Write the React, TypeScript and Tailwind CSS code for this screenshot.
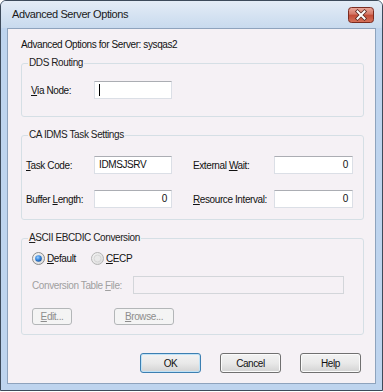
import React from "react";

const font = "font-['Liberation_Sans',Arial,sans-serif]";

function Radio({ checked }: { checked: boolean }) {
  return (
    <svg width="13" height="13" viewBox="0 0 13 13" className="shrink-0">
      <defs>
        <linearGradient id={checked ? "rg1" : "rg0"} x1="0" y1="0" x2="1" y2="1">
          <stop offset="0" stopColor="#f4f4f4" />
          <stop offset="1" stopColor="#dcdcdc" />
        </linearGradient>
        <radialGradient id="dot" cx="0.4" cy="0.35" r="0.7">
          <stop offset="0" stopColor="#9fd0ff" />
          <stop offset="0.5" stopColor="#3a8ae0" />
          <stop offset="1" stopColor="#17509a" />
        </radialGradient>
      </defs>
      <circle cx="6.5" cy="6.5" r="6" fill={checked ? "url(#rg1)" : "url(#rg0)"} stroke={checked ? "#8a8a8a" : "#b4b4b4"} />
      {checked ? (
        <circle cx="6.5" cy="6.5" r="3.3" fill="url(#dot)" />
      ) : (
        <circle cx="6.5" cy="6.5" r="3.5" fill="#e9e9e9" stroke="#d0d0d0" strokeWidth="0.8" />
      )}
    </svg>
  );
}

function Field({ value, right, width, caret }: { value?: string; right?: boolean; width: string; caret?: boolean }) {
  return (
    <div
      className={`${width} h-[18px] shrink-0 bg-white border border-[#dbdfe6] border-t-[#abadb3] flex items-center px-[4px] ${right ? "justify-end" : ""}`}
    >
      {caret && <span className="w-px h-[12px] bg-black" />}
      {value && <span className="text-[10px] leading-[12px] tracking-[-0.4px] text-[#111]">{value}</span>}
    </div>
  );
}

function Btn({ children, def, disabled, width }: { children: React.ReactNode; def?: boolean; disabled?: boolean; width: string }) {
  if (disabled)
    return (
      <div className={`${width} h-[17px] rounded-[3px] border border-[#b3b6b8] bg-[#f4f4f4] flex items-center justify-center text-[10px] tracking-[-0.4px] text-[#8d8d8d]`}>
        {children}
      </div>
    );
  return (
    <div
      className={`${width} h-[20px] rounded-[3px] border ${def ? "border-[#3c7fb1] shadow-[inset_0_0_0_1px_#bfe2f7]" : "border-[#707070] shadow-[inset_0_0_0_1px_#fbfbfb]"} bg-linear-to-b from-[#f3f3f3] via-[#e9e9e9] to-[#d3d3d3] flex items-center justify-center text-[10px] tracking-[-0.4px] text-[#111]`}
    >
      {children}
    </div>
  );
}

export default function App() {
  return (
    <div className={`w-[383px] h-[392px] bg-white ${font}`}>
      <div className="w-[383px] h-[391px] border border-[#3d4a5a] rounded-t-[6px] bg-[#bed4ee] flex flex-col overflow-hidden">
        {/* title bar */}
        <div className="h-[27px] shrink-0 flex items-center justify-between pl-[11px] pr-[8px] bg-linear-to-b from-[#e4ecf6] to-[#c8daee]">
          <span className="text-[11px] tracking-[-0.4px] text-[#1a1a1a]">Advanced Server Options</span>
          <svg width="26" height="16" viewBox="0 0 26 16">
            <defs>
              <linearGradient id="cls" x1="0" y1="0" x2="0" y2="1">
                <stop offset="0" stopColor="#e9a99c" />
                <stop offset="0.45" stopColor="#d47666" />
                <stop offset="0.5" stopColor="#c24a36" />
                <stop offset="1" stopColor="#d6735c" />
              </linearGradient>
            </defs>
            <rect x="0.5" y="0.5" width="25" height="15" rx="3" fill="url(#cls)" stroke="#7a2b20" />
            <path d="M9.5 4.5 L16.5 11.5 M16.5 4.5 L9.5 11.5" stroke="#5a2a24" strokeWidth="3.6" strokeLinecap="square" />
            <path d="M9.5 4.5 L16.5 11.5 M16.5 4.5 L9.5 11.5" stroke="#ffffff" strokeWidth="2" strokeLinecap="square" />
          </svg>
        </div>

        {/* client area */}
        <div className="flex-1 px-[6px] pb-[6px] flex">
          <div className="flex-1 border border-[#8ea3bd] bg-[#f5f1f5] pl-[13px] pr-[11px] pt-[9px] text-[10px] tracking-[-0.4px] text-[#111]">
            <div className="h-[13px] leading-[13px] pl-[0px]">Advanced Options for Server: sysqas2</div>

            {/* DDS Routing */}
            <fieldset className="mt-[5px] border border-[#d5dfe5] rounded-[3px] px-0 pt-[11px] pb-[17px]">
              <legend className="ml-[6px] px-[1px] leading-[14px] text-[#222]">DDS Routing</legend>
              <div className="flex items-center pl-[9px]">
                <span className="w-[63px] shrink-0">
                  <u>V</u>ia Node:
                </span>
                <Field width="w-[78px]" caret />
              </div>
            </fieldset>

            {/* Task settings */}
            <fieldset className="mt-[11px] border border-[#d5dfe5] rounded-[3px] px-0 pt-[14px] pb-[11px]">
              <legend className="ml-[6px] px-[1px] leading-[14px] text-[#222]">CA IDMS Task Settings</legend>
              <div className="flex flex-col gap-[16px] pl-[4px]">
                <div className="flex items-center">
                  <span className="w-[68px] shrink-0">
                    <u>T</u>ask Code:
                  </span>
                  <Field width="w-[78px]" value="IDMSJSRV" />
                  <span className="w-[81px] ml-[21px] shrink-0">
                    External <u>W</u>ait:
                  </span>
                  <Field width="w-[79px]" value="0" right />
                </div>
                <div className="flex items-center">
                  <span className="w-[68px] shrink-0">
                    Buffer <u>L</u>ength:
                  </span>
                  <Field width="w-[78px]" value="0" right />
                  <span className="w-[81px] ml-[21px] shrink-0">
                    <u>R</u>esource Interval:
                  </span>
                  <Field width="w-[79px]" value="0" right />
                </div>
              </div>
            </fieldset>

            {/* Conversion */}
            <fieldset className="mt-[11px] border border-[#d5dfe5] rounded-[3px] px-0 pt-[6px] pb-[9px]">
              <legend className="ml-[6px] px-[1px] leading-[14px] text-[#222]">
                <u>A</u>SCII EBCDIC Conversion
              </legend>
              <div className="pl-[10px]">
                <div className="h-[14px] flex items-center">
                  <div className="w-[59px] flex items-center gap-[2px]">
                    <Radio checked />
                    <span>
                      <u>D</u>efault
                    </span>
                  </div>
                  <div className="flex items-center gap-[2px]">
                    <Radio checked={false} />
                    <span>
                      <u>C</u>ECP
                    </span>
                  </div>
                </div>
                <div className="mt-[11px] flex items-center">
                  <span className="w-[101px] shrink-0 text-[#a0a0a0]">
                    Conversion Table <u>F</u>ile:
                  </span>
                  <div className="w-[211px] h-[18px] border border-[#d3d6da] bg-[#f5f1f5]" />
                </div>
                <div className="mt-[14px] flex items-center gap-[42px]">
                  <Btn disabled width="w-[40px]">
                    <span>
                      <u>E</u>dit...
                    </span>
                  </Btn>
                  <Btn disabled width="w-[60px]">
                    <span>
                      <u>B</u>rowse...
                    </span>
                  </Btn>
                </div>
              </div>
            </fieldset>

            {/* dialog buttons */}
            <div className="mt-[18px] mr-[3px] flex justify-end gap-[19px]">
              <Btn def width="w-[61px]">OK</Btn>
              <Btn width="w-[61px]">Cancel</Btn>
              <Btn width="w-[61px]">Help</Btn>
            </div>
          </div>
        </div>
      </div>
    </div>
  );
}
